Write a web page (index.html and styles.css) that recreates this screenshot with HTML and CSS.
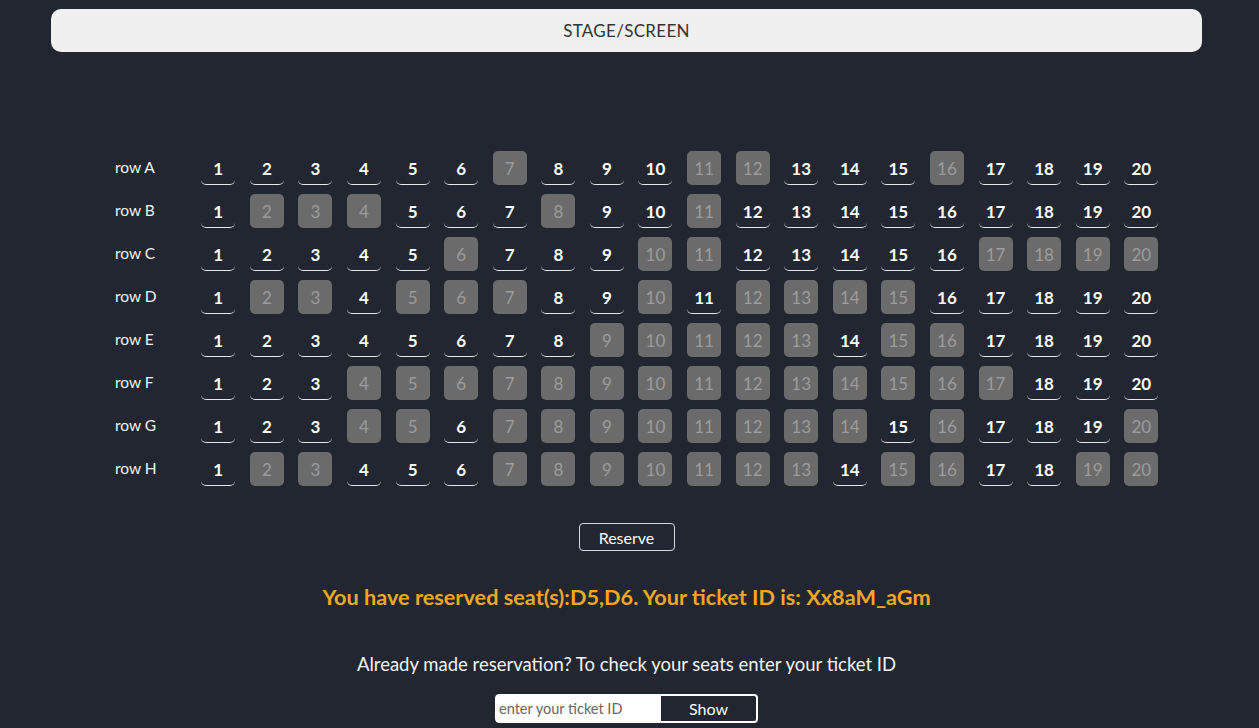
FILE: index.html
```html
<!DOCTYPE html>
<html>
<head>
<meta charset="utf-8">
<link rel="stylesheet" href="styles.css">
</head>
<body>
<div class="page">
  <div class="stage">STAGE/SCREEN</div>
  <div class="hall">
    <div class="label">row A</div>
    <div class="seat">1</div><div class="seat">2</div><div class="seat">3</div><div class="seat">4</div><div class="seat">5</div><div class="seat">6</div><div class="seat taken">7</div><div class="seat">8</div><div class="seat">9</div><div class="seat">10</div><div class="seat taken">11</div><div class="seat taken">12</div><div class="seat">13</div><div class="seat">14</div><div class="seat">15</div><div class="seat taken">16</div><div class="seat">17</div><div class="seat">18</div><div class="seat">19</div><div class="seat">20</div>
    <div class="label">row B</div>
    <div class="seat">1</div><div class="seat taken">2</div><div class="seat taken">3</div><div class="seat taken">4</div><div class="seat">5</div><div class="seat">6</div><div class="seat">7</div><div class="seat taken">8</div><div class="seat">9</div><div class="seat">10</div><div class="seat taken">11</div><div class="seat">12</div><div class="seat">13</div><div class="seat">14</div><div class="seat">15</div><div class="seat">16</div><div class="seat">17</div><div class="seat">18</div><div class="seat">19</div><div class="seat">20</div>
    <div class="label">row C</div>
    <div class="seat">1</div><div class="seat">2</div><div class="seat">3</div><div class="seat">4</div><div class="seat">5</div><div class="seat taken">6</div><div class="seat">7</div><div class="seat">8</div><div class="seat">9</div><div class="seat taken">10</div><div class="seat taken">11</div><div class="seat">12</div><div class="seat">13</div><div class="seat">14</div><div class="seat">15</div><div class="seat">16</div><div class="seat taken">17</div><div class="seat taken">18</div><div class="seat taken">19</div><div class="seat taken">20</div>
    <div class="label">row D</div>
    <div class="seat">1</div><div class="seat taken">2</div><div class="seat taken">3</div><div class="seat">4</div><div class="seat taken">5</div><div class="seat taken">6</div><div class="seat taken">7</div><div class="seat">8</div><div class="seat">9</div><div class="seat taken">10</div><div class="seat">11</div><div class="seat taken">12</div><div class="seat taken">13</div><div class="seat taken">14</div><div class="seat taken">15</div><div class="seat">16</div><div class="seat">17</div><div class="seat">18</div><div class="seat">19</div><div class="seat">20</div>
    <div class="label">row E</div>
    <div class="seat">1</div><div class="seat">2</div><div class="seat">3</div><div class="seat">4</div><div class="seat">5</div><div class="seat">6</div><div class="seat">7</div><div class="seat">8</div><div class="seat taken">9</div><div class="seat taken">10</div><div class="seat taken">11</div><div class="seat taken">12</div><div class="seat taken">13</div><div class="seat">14</div><div class="seat taken">15</div><div class="seat taken">16</div><div class="seat">17</div><div class="seat">18</div><div class="seat">19</div><div class="seat">20</div>
    <div class="label">row F</div>
    <div class="seat">1</div><div class="seat">2</div><div class="seat">3</div><div class="seat taken">4</div><div class="seat taken">5</div><div class="seat taken">6</div><div class="seat taken">7</div><div class="seat taken">8</div><div class="seat taken">9</div><div class="seat taken">10</div><div class="seat taken">11</div><div class="seat taken">12</div><div class="seat taken">13</div><div class="seat taken">14</div><div class="seat taken">15</div><div class="seat taken">16</div><div class="seat taken">17</div><div class="seat">18</div><div class="seat">19</div><div class="seat">20</div>
    <div class="label">row G</div>
    <div class="seat">1</div><div class="seat">2</div><div class="seat">3</div><div class="seat taken">4</div><div class="seat taken">5</div><div class="seat">6</div><div class="seat taken">7</div><div class="seat taken">8</div><div class="seat taken">9</div><div class="seat taken">10</div><div class="seat taken">11</div><div class="seat taken">12</div><div class="seat taken">13</div><div class="seat taken">14</div><div class="seat">15</div><div class="seat taken">16</div><div class="seat">17</div><div class="seat">18</div><div class="seat">19</div><div class="seat taken">20</div>
    <div class="label">row H</div>
    <div class="seat">1</div><div class="seat taken">2</div><div class="seat taken">3</div><div class="seat">4</div><div class="seat">5</div><div class="seat">6</div><div class="seat taken">7</div><div class="seat taken">8</div><div class="seat taken">9</div><div class="seat taken">10</div><div class="seat taken">11</div><div class="seat taken">12</div><div class="seat taken">13</div><div class="seat">14</div><div class="seat taken">15</div><div class="seat taken">16</div><div class="seat">17</div><div class="seat">18</div><div class="seat taken">19</div><div class="seat taken">20</div>
  </div>
  <div class="actions"><button class="reserve">Reserve</button></div>
  <p class="message">You have reserved seat(s):D5,D6. Your ticket ID is: Xx8aM_aGm</p>
  <p class="check">Already made reservation? To check your seats enter your ticket ID</p>
  <div class="lookup">
    <input class="ticket" type="text" placeholder="enter your ticket ID">
    <button class="show">Show</button>
  </div>
</div>
</body>
</html>
```

FILE: styles.css
```css
html, body {
  margin: 0;
  padding: 0;
  background: #212630;
  font-family: "Lato", "Open Sans", sans-serif;
  color: #ffffff;
}
.page {
  width: 1259px;
  height: 728px;
  overflow: hidden;
  display: flex;
  flex-direction: column;
}
.stage {
  margin: 9px 0 0 51px;
  width: 1151px;
  height: 43px;
  box-sizing: border-box;
  background: #f0f0f0;
  border-radius: 10px;
  color: #333;
  font-size: 17px;
  letter-spacing: 0.3px;
  display: flex;
  align-items: center;
  justify-content: center;
}
.hall {
  margin: 99px 0 0 115px;
  display: grid;
  grid-template-columns: 79px repeat(20, 48.58px);
  grid-auto-rows: 34px;
  row-gap: 9px;
  justify-content: start;
}
.label {
  display: flex;
  align-items: center;
  justify-content: flex-start;
  font-size: 15.5px;
  color: #f2f2f2;
  padding-bottom: 3px;
  box-sizing: border-box;
}
.seat {
  justify-self: center;
  width: 34px;
  height: 34px;
  box-sizing: border-box;
  display: flex;
  align-items: center;
  justify-content: center;
  font-size: 17px;
  font-weight: 700;
  color: #ffffff;
  border-bottom: 1px solid #e6e6e6;
  border-radius: 5px;
  padding-top: 1px;
}
.seat.taken {
  background: #6b6b6b;
  color: #9c9c9c;
  border-bottom: none;
  font-weight: 400;
}
.actions {
  display: flex;
  justify-content: center;
  margin-top: 37px;
  padding-right: 6px;
}
.reserve {
  width: 96px;
  height: 28px;
  background: transparent;
  border: 1px solid #d8d8d8;
  border-radius: 4px;
  color: #ffffff;
  font-family: inherit;
  font-size: 16px;
  padding: 0;
}
.message {
  margin: 33px 0 0 0;
  text-align: center;
  color: #f5a623;
  font-size: 21.7px;
  font-weight: 700;
  padding-right: 6px;
}
.check {
  margin: 43px 0 0 0;
  text-align: center;
  font-size: 18.5px;
  color: #f4f4f4;
  padding-right: 6px;
}
.lookup {
  display: flex;
  justify-content: center;
  margin-top: 19px;
  padding-right: 6px;
}
.ticket {
  width: 166px;
  height: 29px;
  box-sizing: border-box;
  border: 1px solid #ffffff;
  border-radius: 4px 0 0 4px;
  background: #ffffff;
  font-family: inherit;
  font-size: 14.5px;
  padding: 0 3px;
  color: #333;
  outline: none;
}
.ticket::placeholder {
  color: #666;
}
.show {
  width: 97px;
  height: 29px;
  box-sizing: border-box;
  background: #212630;
  border: 2px solid #ffffff;
  border-left: none;
  border-radius: 0 4px 4px 0;
  color: #ffffff;
  font-family: inherit;
  font-size: 16px;
  padding: 0;
}
```
